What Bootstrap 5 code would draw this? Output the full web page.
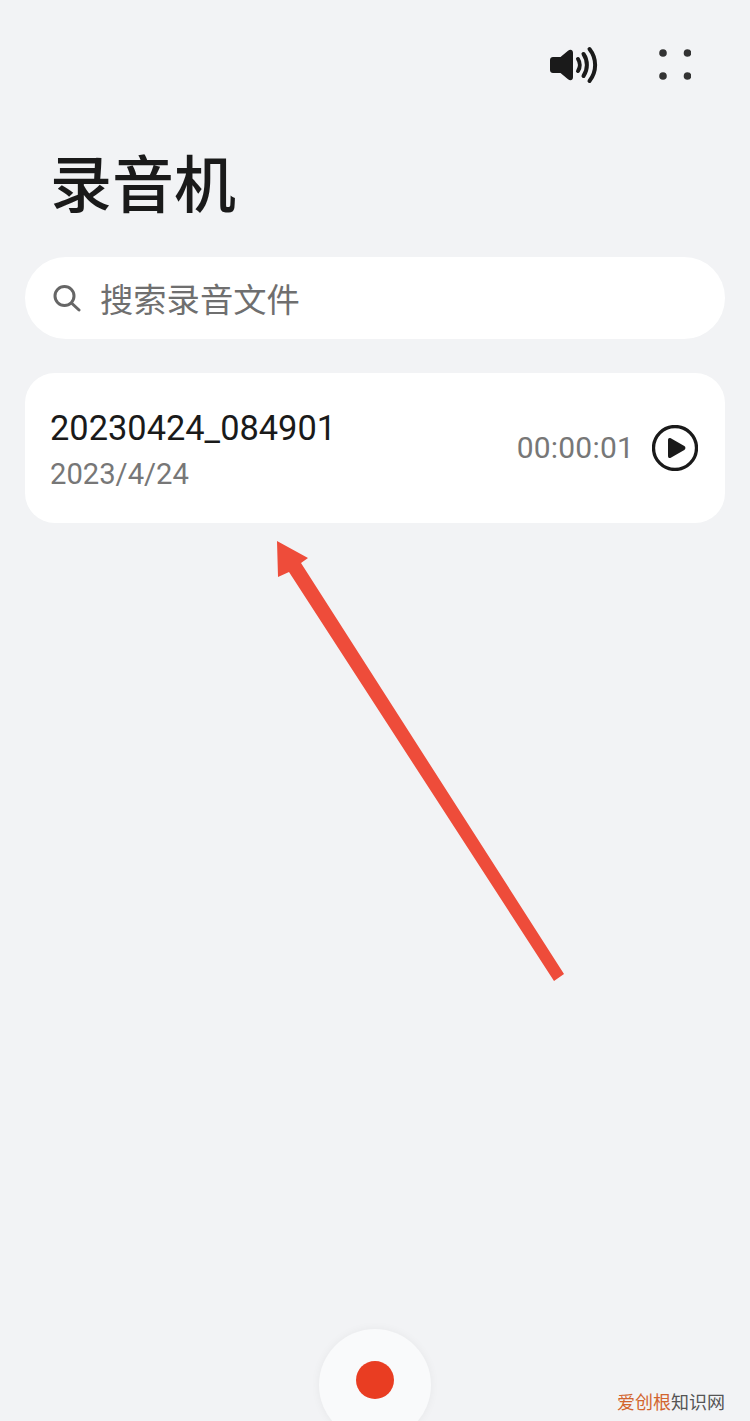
<!doctype html>
<html lang="zh-CN">
<head>
  <meta charset="utf-8">
  <meta name="viewport" content="width=device-width, initial-scale=1">
  <title>录音机</title>
  <link href="https://cdn.jsdelivr.net/npm/bootstrap@5.3.5/dist/css/bootstrap.min.css" rel="stylesheet">
  <style>
    html, body { height: 1421px; overflow: hidden; }
    body { background: #f2f3f5; font-family: "Roboto", "Noto Sans CJK SC", sans-serif; color: #1a1a1a; }
    .pagina { position: relative; height: 1421px; overflow: hidden; padding: 0 25px; }
    .topo { height: 128px; padding: 46px 34px 0 0; gap: 59px; }
    .titulo { height: 129px; margin: -4px 0 4px; padding-left: 25px; font-size: 62px; line-height: 114px; font-weight: 500; font-family: "Noto Sans CJK SC", sans-serif; }
    .busca { height: 82px; border-radius: 41px; background: #fff; padding-left: 28px; gap: 19px; margin-bottom: 34px; }
    .busca span { font-family: "Noto Sans CJK SC", sans-serif; font-size: 33.3px; line-height: 1; color: #6f6f6f; }
    .gravacao { height: 150px; border-radius: 30px; background: #fff; padding: 2px 27px 0 25px; }
    .nome { font-size: 34.4px; line-height: 42px; margin-bottom: 7px; }
    .data { font-size: 29.2px; line-height: 36px; color: #777; }
    .duracao { font-size: 30px; line-height: 36px; color: #777; margin-right: 18px; letter-spacing: .2px; }
    .direita { margin-top: -2px; }
    .seta { position: absolute; left: 0; top: 0; pointer-events: none; }
    .gravar { position: absolute; left: 319px; top: 1329px; width: 112px; height: 112px; border-radius: 50%; background: #f9fafb; box-shadow: 0 0 10px rgba(0, 0, 0, .05); }
    .gravar i { display: block; width: 38px; height: 38px; border-radius: 50%; background: #e93d22; }
    .marca { position: absolute; left: 617px; top: 1390px; font-family: "Noto Sans CJK SC", sans-serif; font-size: 18px; line-height: 22px; color: #555; white-space: nowrap; }
    .marca b { font-weight: 400; color: #d2652f; }
  </style>
</head>

<body>
  <div class="pagina">
    <!-- Icones do topo -->
    <div class="topo d-flex justify-content-end align-items-start">
      <svg width="50" height="38" viewBox="0 0 50 38">
        <path d="M3 11h7.500L18 4.800c2.300-1.800 5-1 5 2v24.400c0 3-2.700 3.800-5 2L10.500 27H3c-1.700 0-3-1.300-3-3V14c0-1.700 1.300-3 3-3z" fill="#1a1a1a"/>
        <g fill="none" stroke="#1a1a1a" stroke-width="4" stroke-linecap="round">
          <path d="M28 13c2.300 3.500 2.300 8.500 0 12"/>
          <path d="M33.500 8c4.500 6.500 4.500 15.500 0 22"/>
          <path d="M39.500 3c7.500 9.500 7.500 22.500 0 32"/>
        </g>
      </svg>
      <svg width="32" height="36" viewBox="0 0 32 36" fill="#333">
        <circle cx="4" cy="7" r="3.800"/><circle cx="28.500" cy="7" r="3.800"/>
        <circle cx="4" cy="30" r="3.800"/><circle cx="28.500" cy="30" r="3.800"/>
      </svg>
    </div>

    <h1 class="titulo">录音机</h1>

    <!-- Busca -->
    <div class="busca d-flex align-items-center">
      <svg width="28" height="28" viewBox="0 0 28 28" fill="none" stroke="#666" stroke-width="3" stroke-linecap="round">
        <circle cx="11.500" cy="12" r="9.500"/>
        <path d="M19 19.500l7 6.500"/>
      </svg>
      <span>搜索录音文件</span>
    </div>

    <!-- Lista de gravacoes -->
    <div class="gravacao d-flex justify-content-between align-items-center">
      <div>
        <div class="nome">20230424_084901</div>
        <div class="data">2023/4/24</div>
      </div>
      <div class="direita d-flex align-items-center">
        <span class="duracao">00:00:01</span>
        <svg width="46" height="46" viewBox="0 0 46 46">
          <circle cx="23" cy="23" r="21.500" fill="none" stroke="#1a1a1a" stroke-width="3.300"/>
          <path d="M16 15c0-1.800 1.300-2.600 2.800-1.700l13.500 7.800c1.500.9 1.500 2.900 0 3.800l-13.500 7.800c-1.500.9-2.800.1-2.800-1.700z" fill="#1a1a1a"/>
        </svg>
      </div>
    </div>

    <!-- Seta vermelha sobre a tela -->
    <svg class="seta" width="750" height="1421" viewBox="0 0 750 1421">
      <polygon points="277,541 308,558 301,563 564,974 554,981 289,572 278,577" fill="#ee4c3a"/>
    </svg>

    <div class="gravar d-flex justify-content-center pt-4">
      <i class="mt-2"></i>
    </div>

    <div class="marca"><b>爱创根</b>知识网</div>
  </div>

  <script src="https://cdn.jsdelivr.net/npm/bootstrap@5.3.5/dist/js/bootstrap.bundle.min.js"></script>
</body>
</html>
